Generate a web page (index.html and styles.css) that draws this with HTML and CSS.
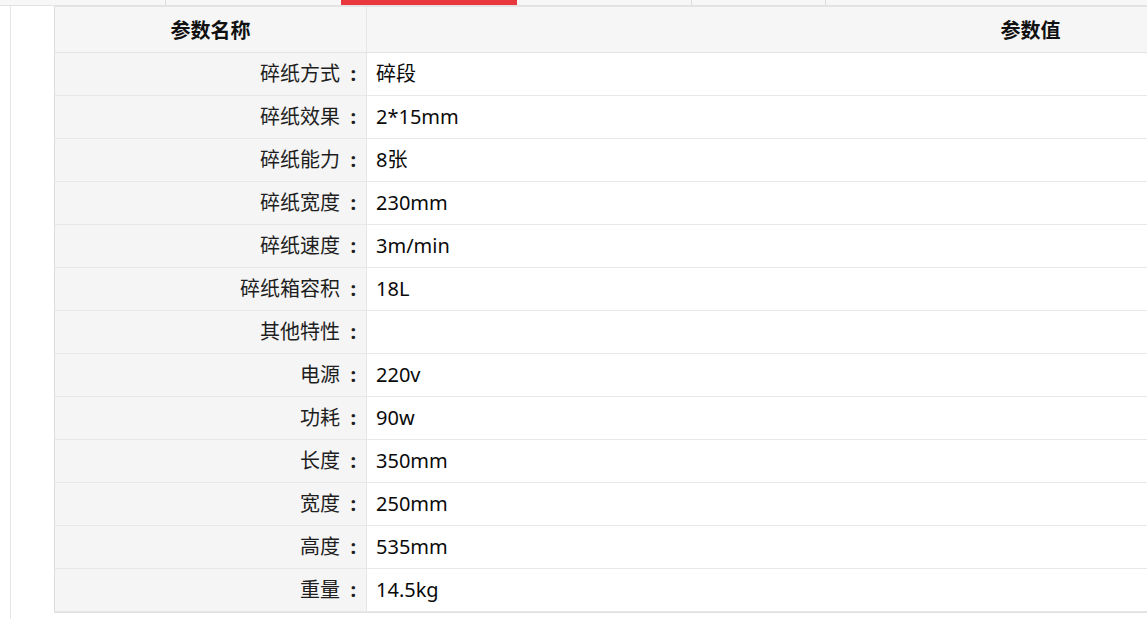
FILE: index.html
```html
<!DOCTYPE html>
<html lang="zh-CN">
<head>
<meta charset="utf-8">
<title>参数</title>
<link rel="stylesheet" href="styles.css">
</head>
<body>
<div class="tabs">
  <div class="tab tab-a"></div>
  <div class="tab tab-b"></div>
  <div class="tab tab-active"></div>
  <div class="tab tab-c"></div>
  <div class="tab tab-d"></div>
  <div class="tab tab-rest"></div>
</div>
<div class="panel">
  <table class="params">
    <thead>
      <tr><th class="name">参数名称</th><th class="value">参数值</th></tr>
    </thead>
    <tbody>
      <tr><td class="name">碎纸方式<span class="colon">:</span></td><td class="value">碎段</td></tr>
      <tr><td class="name">碎纸效果<span class="colon">:</span></td><td class="value">2*15mm</td></tr>
      <tr><td class="name">碎纸能力<span class="colon">:</span></td><td class="value">8张</td></tr>
      <tr><td class="name">碎纸宽度<span class="colon">:</span></td><td class="value">230mm</td></tr>
      <tr><td class="name">碎纸速度<span class="colon">:</span></td><td class="value">3m/min</td></tr>
      <tr><td class="name">碎纸箱容积<span class="colon">:</span></td><td class="value">18L</td></tr>
      <tr><td class="name">其他特性<span class="colon">:</span></td><td class="value"></td></tr>
      <tr><td class="name">电源<span class="colon">:</span></td><td class="value">220v</td></tr>
      <tr><td class="name">功耗<span class="colon">:</span></td><td class="value">90w</td></tr>
      <tr><td class="name">长度<span class="colon">:</span></td><td class="value">350mm</td></tr>
      <tr><td class="name">宽度<span class="colon">:</span></td><td class="value">250mm</td></tr>
      <tr><td class="name">高度<span class="colon">:</span></td><td class="value">535mm</td></tr>
      <tr><td class="name">重量<span class="colon">:</span></td><td class="value">14.5kg</td></tr>
    </tbody>
  </table>
</div>
</body>
</html>
```
FILE: styles.css
```css
html, body {
  margin: 0;
  padding: 0;
  overflow: hidden;
  background: #fff;
}
body {
  font-family: "Noto Sans", "Noto Sans CJK SC", sans-serif;
  color: #222;
}
.tabs {
  display: flex;
  height: 5px;
  background: #f7f7f7;
  border-bottom: 1px solid #e2e2e2;
}
.tab {
  box-sizing: border-box;
  height: 5px;
  flex: none;
}
.tab-a { width: 166px; border-right: 1px solid #dcdcdc; }
.tab-b { width: 175px; }
.tab-active { width: 176px; background: #e8383d; }
.tab-c { width: 175px; border-right: 1px solid #dcdcdc; }
.tab-d { width: 134px; border-right: 1px solid #dcdcdc; }
.tab-rest { flex: 1; }

.panel {
  margin-left: 10px;
  border-left: 1px solid #e5e5e5;
  padding-left: 43px;
  height: 613px;
  overflow: hidden;
}
.params {
  width: 1640px;
  border-collapse: separate;
  border-spacing: 0;
  border-top: 1px solid #e4e4e4;
  border-left: 1px solid #dcdcdc;
  border-bottom: 1px solid #e0e0e0;
  font-size: 20px;
}
.params th {
  height: 45px;
  padding: 0;
  background: #f6f6f6;
  font-weight: bold;
  color: #111;
  text-align: center;
  border-bottom: 1px solid #e4e4e4;
}
.params td {
  height: 42px;
  padding: 0;
  border-bottom: 1px solid #e8e8e8;
  line-height: 42px;
}
.params th.name, .params td.name {
  width: 311px;
  border-right: 1px solid #e6e6e6;
}
.params td.name {
  background: #f5f5f5;
  text-align: right;
  padding-right: 6px;
  width: 305px;
  color: #1e1e1e;
}
.colon {
  display: inline-block;
  box-sizing: border-box;
  width: 20px;
  padding-right: 4px;
  text-align: right;
  font-weight: bold;
}
.params td.value {
  padding-left: 9px;
  color: #0a0a0a;
}
```
